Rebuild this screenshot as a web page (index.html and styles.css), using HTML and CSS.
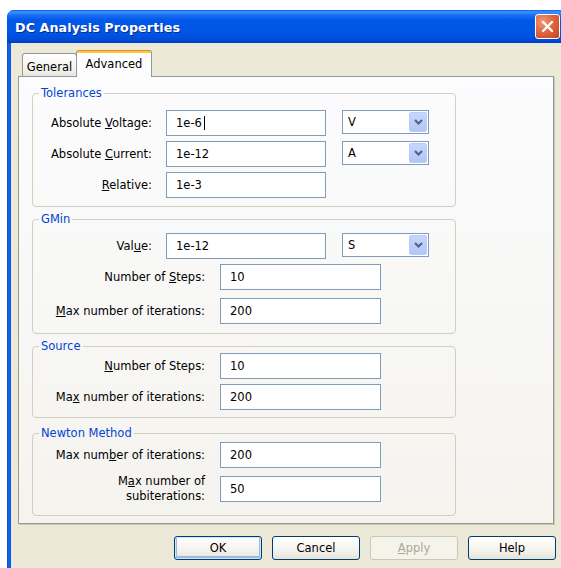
FILE: index.html
```html
<!DOCTYPE html>
<html lang="en">
<head>
<meta charset="utf-8">
<title>DC Analysis Properties</title>
<link rel="stylesheet" href="styles.css">
</head>
<body>
<div class="window">
  <div class="titlebar">
    <span class="title">DC Analysis Properties</span>
    <button class="close" aria-label="Close">
      <svg width="13" height="13" viewBox="0 0 13 13"><path d="M2 2 L11 11 M11 2 L2 11" stroke="#fff" stroke-width="2.4" stroke-linecap="round"/></svg>
    </button>
  </div>
  <div class="client">
    <div class="tabs">
      <div class="tab">General</div>
      <div class="tab active">Advanced</div>
    </div>
    <div class="panel">
      <fieldset class="group g-tol">
        <legend>Tolerances</legend>
        <div class="row">
          <label class="label">Absolute <u>V</u>oltage:</label>
          <div class="input">1e-6<span class="caret"></span></div>
          <div class="combo"><span>V</span><span class="drop"><svg width="9" height="6" viewBox="0 0 9 6"><path d="M1 1 L4.5 4.5 L8 1" fill="none" stroke="#4D6185" stroke-width="2"/></svg></span></div>
        </div>
        <div class="row">
          <label class="label">Absolute <u>C</u>urrent:</label>
          <div class="input">1e-12</div>
          <div class="combo"><span>A</span><span class="drop"><svg width="9" height="6" viewBox="0 0 9 6"><path d="M1 1 L4.5 4.5 L8 1" fill="none" stroke="#4D6185" stroke-width="2"/></svg></span></div>
        </div>
        <div class="row">
          <label class="label"><u>R</u>elative:</label>
          <div class="input">1e-3</div>
        </div>
      </fieldset>

      <fieldset class="group g-gmin">
        <legend>GMin</legend>
        <div class="row">
          <label class="label">Val<u>u</u>e:</label>
          <div class="input">1e-12</div>
          <div class="combo"><span>S</span><span class="drop"><svg width="9" height="6" viewBox="0 0 9 6"><path d="M1 1 L4.5 4.5 L8 1" fill="none" stroke="#4D6185" stroke-width="2"/></svg></span></div>
        </div>
        <div class="row">
          <label class="label wide">Number of <u>S</u>teps:</label>
          <div class="input long">10</div>
        </div>
        <div class="row spaced">
          <label class="label wide"><u>M</u>ax number of iterations:</label>
          <div class="input long">200</div>
        </div>
      </fieldset>

      <fieldset class="group g-src">
        <legend>Source</legend>
        <div class="row">
          <label class="label wide"><u>N</u>umber of Steps:</label>
          <div class="input long">10</div>
        </div>
        <div class="row">
          <label class="label wide">Ma<u>x</u> number of iterations:</label>
          <div class="input long">200</div>
        </div>
      </fieldset>

      <fieldset class="group g-newton">
        <legend>Newton Method</legend>
        <div class="row">
          <label class="label wide">Max num<u>b</u>er of iterations:</label>
          <div class="input long">200</div>
        </div>
        <div class="row spaced">
          <label class="label wide two">M<u>a</u>x number of<br>subiterations:</label>
          <div class="input long">50</div>
        </div>
      </fieldset>
    </div>
    <div class="buttons">
      <button class="btn default">OK</button>
      <button class="btn">Cancel</button>
      <button class="btn" disabled><u>A</u>pply</button>
      <button class="btn">Help</button>
    </div>
  </div>
</div>
</body>
</html>
```
FILE: styles.css
```css
html, body {
  margin: 0;
  height: 100%;
  overflow: hidden;
  background: #fff;
}

body {
  font-family: "DejaVu Sans", Verdana, sans-serif;
  font-size: 11.5px;
  color: #000;
}

/* window frame */
.window {
  margin: 10px 0 0 7px;
  width: 560px;
  height: 570px;
  border-radius: 7px 7px 0 0;
  overflow: hidden;
  background: linear-gradient(to right, #0747D4 0, #166AF2 2px, #0055E5 4px);
  display: flex;
  flex-direction: column;
}

.titlebar {
  height: 33px;
  flex: none;
  display: flex;
  align-items: center;
  padding: 0 7px 0 8px;
  background: linear-gradient(to bottom, #0A5FEF 0, #3D95FF 2px, #1A6FF4 5px, #0058E8 10px, #0054E3 75%, #0049D6 92%, #003DBF 100%);
}

.title {
  flex: 1;
  color: #fff;
  font-weight: bold;
  font-size: 12.7px;
  letter-spacing: 0.1px;
  padding-top: 1px;
  text-shadow: 1px 1px 0 #0C2C8F;
}

.close {
  width: 25px;
  height: 25px;
  padding: 0;
  border: 1px solid #fff;
  border-radius: 3px;
  background: radial-gradient(circle at 30% 30%, #F09A7A 0, #E26B45 40%, #C8411C 100%);
  display: flex;
  align-items: center;
  justify-content: center;
}

/* client area */
.client {
  flex: 1;
  margin: 0 4px;
  background: #ECE9D8;
  padding-top: 7px;
}

.tabs {
  display: flex;
  align-items: flex-end;
  height: 27px;
  margin: 0 0 -1px 11px;
  position: relative;
  z-index: 1;
}

.tab {
  box-sizing: border-box;
  width: 55px;
  height: 23px;
  margin-bottom: 1px;
  border: 1px solid #919B9C;
  border-bottom: none;
  border-radius: 3px 3px 0 0;
  background: linear-gradient(#FFFFFF, #F3F2EC 70%, #E8E6DC);
  display: flex;
  align-items: center;
  justify-content: center;
  padding-top: 3px;
}

.tab.active {
  width: 76px;
  height: 27px;
  margin-bottom: 0;
  margin-left: -1px;
  border-top: none;
  background: linear-gradient(#E68B2C 0, #E68B2C 1px, #FFC73C 1px, #FFC73C 3px, #FFFFFF 3px, #FCFCFE);
  padding-top: 1px;
}

.panel {
  box-sizing: border-box;
  margin-left: 7px;
  width: 536px;
  height: 448px;
  border: 1px solid #919B9C;
  background: linear-gradient(#FCFCFE, #F4F3EE);
  box-shadow: 1px 1px 0 #C9C6B6;
  padding: 9px 0 0 13px;
}

/* group boxes */
.group {
  box-sizing: border-box;
  width: 424px;
  margin: 0;
  border: 1px solid #D0D0BF;
  border-radius: 4px;
  padding: 0;
}

.group legend {
  color: #0046D5;
  padding: 0 2px;
  margin-left: 6px;
  line-height: 14px;
  height: 14px;
}

.g-tol    { padding: 10px 0 8px; }
.g-gmin   { margin-top: 5px; padding: 7px 0 9px; }
.g-src    { margin-top: 5px; padding: 0 0 7px; }
.g-newton { margin-top: 8px; padding: 2px 0 13px; }

.row {
  display: flex;
  align-items: center;
  height: 26px;
}

.row + .row { margin-top: 5px; }
.row.spaced { margin-top: 8px; }

.label {
  width: 119px;
  flex: none;
  text-align: right;
  white-space: nowrap;
}

.label.wide { width: 172px; }
.label.two { line-height: 15px; }

.input {
  box-sizing: border-box;
  width: 160px;
  height: 26px;
  margin-left: 14px;
  border: 1px solid #7F9DB9;
  background: #fff;
  padding-left: 9px;
  display: flex;
  align-items: center;
}

.input.long {
  width: 161px;
  margin-left: 15px;
}

.caret {
  display: inline-block;
  width: 1px;
  height: 14px;
  background: #000;
  margin-left: 2px;
}

.combo {
  box-sizing: border-box;
  width: 87px;
  height: 24px;
  margin-left: 16px;
  align-self: flex-start;
  border: 1px solid #7F9DB9;
  background: #fff;
  display: flex;
  align-items: center;
  justify-content: space-between;
  padding: 1px 1px 1px 5px;
}

.drop {
  width: 18px;
  height: 20px;
  border-radius: 2px;
  background: linear-gradient(#C6D6FC, #B1C6F7);
  border: 1px solid #B9CCF8;
  box-sizing: border-box;
  display: flex;
  align-items: center;
  justify-content: center;
}

/* dialog buttons */
.buttons {
  display: flex;
  justify-content: flex-end;
  gap: 10px;
  margin-top: 12px;
  padding-right: 7px;
}

.btn {
  box-sizing: border-box;
  width: 88px;
  height: 24px;
  border: 1px solid #003C74;
  border-radius: 3px;
  background: linear-gradient(#FFFFFF, #F4F3EE 60%, #E6E3D6);
  font: inherit;
  color: #000;
  padding: 0;
}

.btn.default {
  box-shadow: inset 0 0 0 1px #CEE7FF, inset 0 -1px 0 2px #98B8EA;
}

.btn:disabled {
  border-color: #C9C7BA;
  background: #F5F4EA;
  color: #ACA899;
}
```
